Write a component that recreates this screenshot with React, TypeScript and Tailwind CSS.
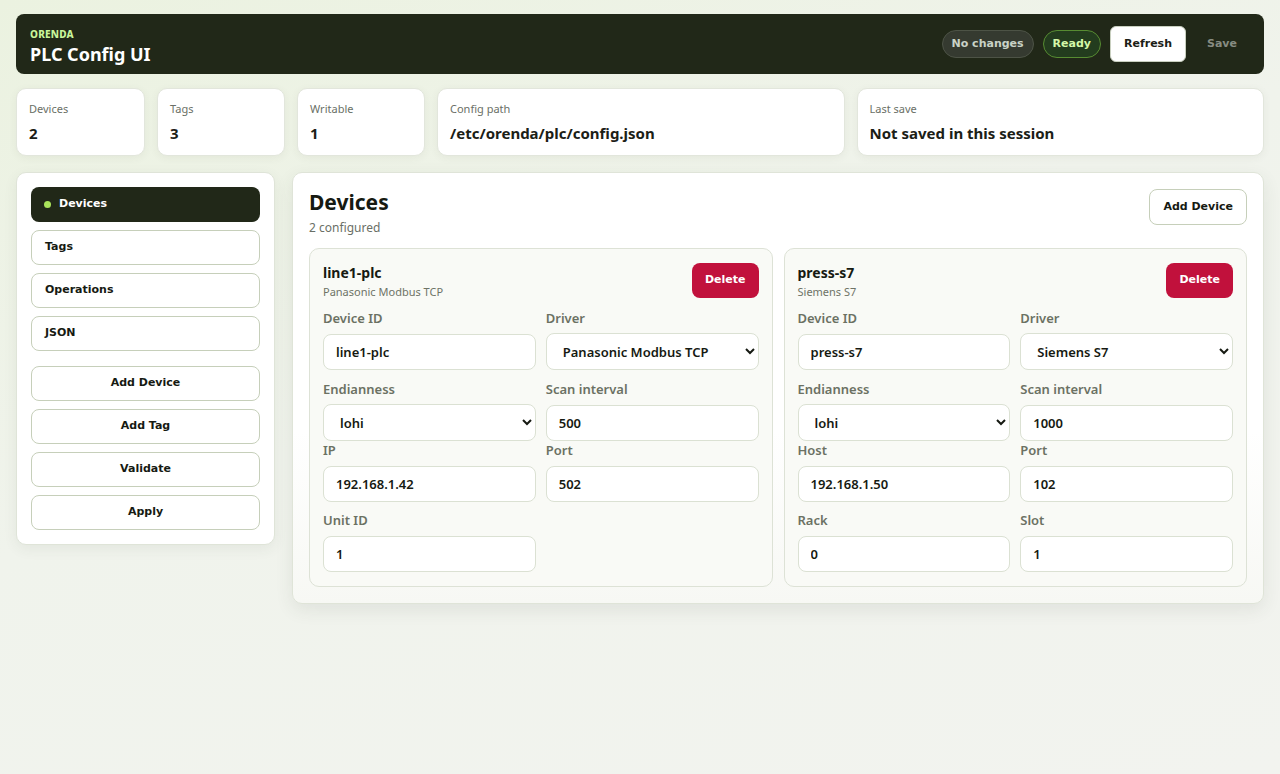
import React from "react";

const btnFont = { fontFamily: '"DejaVu Sans", Verdana, sans-serif' };

function Stat({ label, value }: { label: string; value: string }) {
  return (
    <div className="bg-white rounded-[10px] border border-[#e2e6dc] shadow-[0_2px_8px_rgba(60,70,50,0.06)] px-[12px] pt-[12px] pb-[12px]">
      <div className="text-[11px] leading-[15px] text-[#6a6f66]">{label}</div>
      <div className="mt-[7px] text-[15px] leading-[20px] font-bold text-[#1b2016]">{value}</div>
    </div>
  );
}

function Field({ label, value, select }: { label: string; value: string; select?: boolean }) {
  return (
    <div className="flex flex-col">
      <div className="text-[13px] leading-[16px] font-semibold text-[#6b7163]">{label}</div>
      {select ? (
        <select
          defaultValue={value}
          className="mt-[7px] h-[37px] w-full rounded-lg border border-[#dbe1d3] bg-white px-3 text-[13px] font-semibold text-[#161a12] outline-none"
          style={{ fontFamily: '"Noto Sans", sans-serif' }}
        >
          <option value={value}>{value}</option>
        </select>
      ) : (
        <input
          defaultValue={value}
          className="mt-[8px] h-[36px] w-full rounded-lg border border-[#dbe1d3] bg-white px-3 text-[13px] font-semibold text-[#161a12] outline-none"
        />
      )}
    </div>
  );
}

type Row = [string, string, boolean?][];

function DeviceCard({
  name,
  driver,
  rows,
}: {
  name: string;
  driver: string;
  rows: { mt: string; fields: Row }[];
}) {
  return (
    <div className="rounded-[10px] border border-[#dde2d6] bg-[#f9faf6] px-[13px] pt-[14px] pb-[14px]">
      <div className="flex items-start justify-between">
        <div>
          <div className="text-[14px] leading-[20px] font-bold text-[#161a12]">{name}</div>
          <div className="mt-[2px] text-[11px] leading-[14px] text-[#6e7366]">{driver}</div>
        </div>
        <button
          className="h-[35px] rounded-lg bg-[#c1113c] px-[13px] text-[11px] font-bold text-white"
          style={btnFont}
        >
          Delete
        </button>
      </div>
      {rows.map((r, i) => (
        <div key={i} className={`grid grid-cols-2 gap-x-[10px] ${r.mt}`}>
          {r.fields.map(([l, v, s]) => (
            <Field key={l} label={l} value={v} select={s} />
          ))}
        </div>
      ))}
    </div>
  );
}

export default function App() {
  return (
    <div
      className="min-h-[774px] bg-[linear-gradient(160deg,#ebf2e0_0%,#f0f3ec_45%,#f2f3ef_100%)] px-4 pt-[14px] pb-8 text-[#1b2016]"
      style={{ fontFamily: '"Noto Sans", "Open Sans", sans-serif' }}
    >
      {/* Header */}
      <div className="flex h-[60px] items-center justify-between rounded-lg bg-[#212818] pl-[14px] pr-[14px]">
        <div className="flex flex-col pt-[5px]">
          <div className="text-[10px] leading-[12px] font-extrabold tracking-[0.02em] text-[#c9f59a]">ORENDA</div>
          <div className="mt-[2px] text-[18px] leading-[24px] font-bold text-white">PLC Config UI</div>
        </div>
        <div className="flex items-center" style={btnFont}>
          <span className="flex h-[28px] items-center rounded-full border border-[#4d5346] bg-[#353a30] px-[9px] text-[11px] font-bold text-[#c9d2c6]">
            No changes
          </span>
          <span className="ml-[9px] flex h-[28px] items-center rounded-full border border-[#578c32] bg-[#233c1e] px-[9px] text-[11px] font-bold text-[#d4f7a8]">
            Ready
          </span>
          <button className="ml-[9px] h-[36px] rounded-md border border-[#c9d0c0] bg-white px-[13px] text-[11px] font-bold text-[#1b2016]">
            Refresh
          </button>
          <button className="ml-[8px] h-[36px] w-[56px] rounded-md text-[11px] font-bold text-[#878c82]">Save</button>
        </div>
      </div>

      {/* Stats */}
      <div className="mt-[14px] grid grid-cols-[129px_128px_128px_1fr_1fr] gap-x-[12px]">
        <Stat label="Devices" value="2" />
        <Stat label="Tags" value="3" />
        <Stat label="Writable" value="1" />
        <Stat label="Config path" value="/etc/orenda/plc/config.json" />
        <Stat label="Last save" value="Not saved in this session" />
      </div>

      {/* Body */}
      <div className="mt-[16px] flex items-start gap-[17px]">
        <div className="w-[259px] shrink-0 rounded-[10px] border border-[#dfe4d8] bg-white p-[14px] shadow-[0_4px_14px_rgba(60,70,50,0.07)]">
          <div className="flex flex-col gap-[8px]" style={btnFont}>
            <button className="flex h-[35px] items-center rounded-lg bg-[#212818] px-[13px] text-[11px] font-bold text-white">
              <span className="mr-[8px] h-[7px] w-[7px] rounded-full bg-[#a9e35a]" />
              Devices
            </button>
            {["Tags", "Operations", "JSON"].map((t) => (
              <button
                key={t}
                className="flex h-[35px] items-center rounded-lg border border-[#c6cfba] bg-white px-[13px] text-[11px] font-bold text-[#161a12]"
              >
                {t}
              </button>
            ))}
          </div>
          <div className="mt-[15px] flex flex-col gap-[8px]" style={btnFont}>
            {["Add Device", "Add Tag", "Validate", "Apply"].map((t) => (
              <button
                key={t}
                className="h-[35px] rounded-lg border border-[#c6cfba] bg-white text-[11px] font-bold text-[#161a12]"
              >
                {t}
              </button>
            ))}
          </div>
        </div>

        <div className="flex-1 rounded-[10px] border border-[#dfe4d8] bg-[linear-gradient(180deg,#ffffff_0%,#ffffff_60%,#f7f8f4_100%)] px-[16px] pt-[16px] pb-[16px] shadow-[0_6px_18px_rgba(60,70,50,0.09)]">
          <div className="flex items-start justify-between">
            <div>
              <div className="text-[21px] leading-[26px] font-bold text-[#161a12]">Devices</div>
              <div className="mt-[5px] text-[12px] leading-[16px] text-[#6a6f66]">2 configured</div>
            </div>
            <button
              className="h-[36px] rounded-lg border border-[#c6cfba] bg-white px-[13px] text-[11px] font-bold text-[#161a12]"
              style={btnFont}
            >
              Add Device
            </button>
          </div>
          <div className="mt-[12px] grid grid-cols-2 gap-x-[11px]">
            <DeviceCard
              name="line1-plc"
              driver="Panasonic Modbus TCP"
              rows={[
                { mt: "mt-[11px]", fields: [["Device ID", "line1-plc"], ["Driver", "Panasonic Modbus TCP", true]] },
                { mt: "mt-[11px]", fields: [["Endianness", "lohi", true], ["Scan interval", "500"]] },
                { mt: "mt-[1px]", fields: [["IP", "192.168.1.42"], ["Port", "502"]] },
                { mt: "mt-[10px]", fields: [["Unit ID", "1"]] },
              ]}
            />
            <DeviceCard
              name="press-s7"
              driver="Siemens S7"
              rows={[
                { mt: "mt-[11px]", fields: [["Device ID", "press-s7"], ["Driver", "Siemens S7", true]] },
                { mt: "mt-[11px]", fields: [["Endianness", "lohi", true], ["Scan interval", "1000"]] },
                { mt: "mt-[1px]", fields: [["Host", "192.168.1.50"], ["Port", "102"]] },
                { mt: "mt-[10px]", fields: [["Rack", "0"], ["Slot", "1"]] },
              ]}
            />
          </div>
        </div>
      </div>
    </div>
  );
}
